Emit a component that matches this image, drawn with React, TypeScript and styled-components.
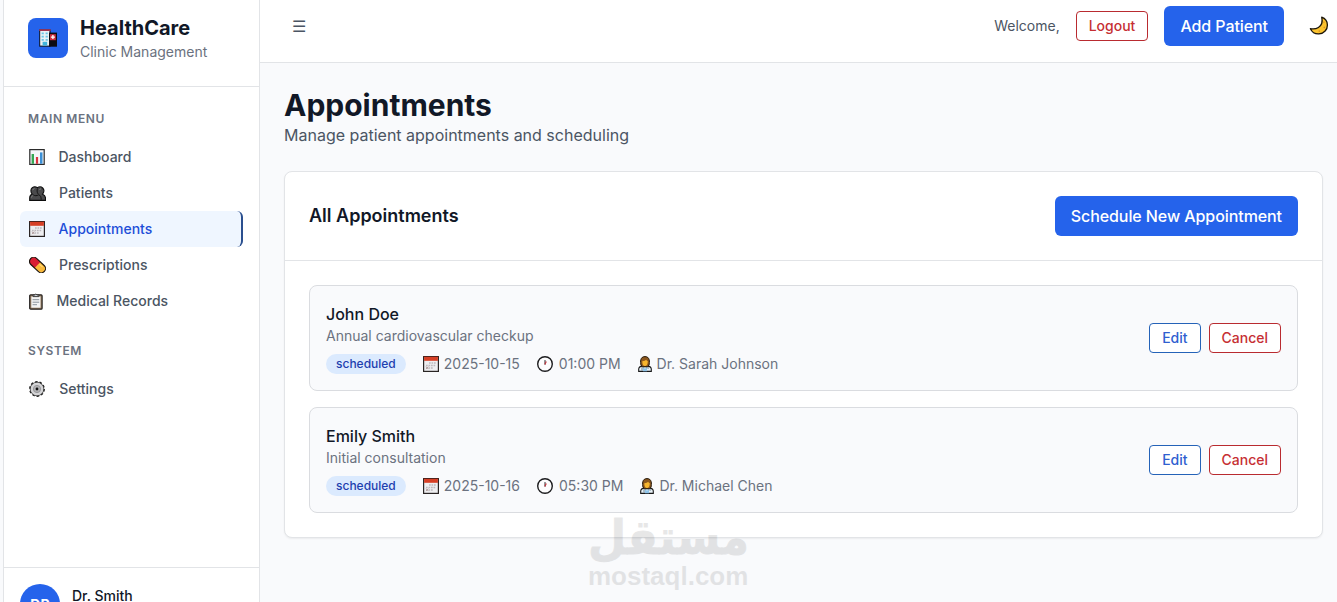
import React from 'react';
import styled, { createGlobalStyle } from 'styled-components';

interface Appointment {
  patient: string;
  reason: string;
  status: string;
  date: string;
  time: string;
  doctor: string;
}

interface MenuEntry {
  label: string;
  icon: React.ReactNode;
  slot: number;
  active?: boolean;
}

const HospitalIcon = () => (
  <svg width="20" height="20" viewBox="0 0 20 20">
    <rect x="1.2" y="1.5" width="11.4" height="17.2" fill="#101828" />
    <rect x="2.2" y="2.6" width="9.2" height="15" fill="#e9f1f6" />
    <rect x="1.2" y="1.2" width="11.4" height="1.8" fill="#a33350" />
    <rect x="11" y="4.6" width="8" height="14.1" fill="#0c0c14" />
    <rect x="12" y="6.2" width="5.8" height="6" fill="#cf2f42" />
    <path d="M14.9 7.1v4M12.9 9.1h4" stroke="#fff" strokeWidth="1.3" />
    <path d="M3.6 5.4h2.2M7.6 5.4h2.2M3.6 8.6h2.2M7.6 8.6h2.2M3.6 11.8h2.2M7.6 11.8h2.2" stroke="#6cc5e6" strokeWidth="1.7" />
    <rect x="4.6" y="13.8" width="4.6" height="3.8" fill="#42b4dc" />
  </svg>
);

const ChartIcon = () => (
  <svg width="16" height="16" viewBox="0 0 16 16">
    <rect x="0.8" y="0.6" width="14.4" height="14.8" fill="#f4f6f8" stroke="#2b2b2b" strokeWidth="1.2" />
    <rect x="2.6" y="5" width="2.4" height="9.8" fill="#35a853" />
    <rect x="6.9" y="8" width="2.2" height="6.8" fill="#d8343f" />
    <rect x="11" y="3.4" width="2.5" height="11.4" fill="#3b8fd6" />
  </svg>
);

const PeopleIcon = () => (
  <svg width="17" height="16" viewBox="0 0 17 16">
    <path
      d="M3.2 9.1C1.5 7 1.4 4.1 3.3 2.6 5 1.4 7 1.7 8.4 2.7c1.6-1.1 3.9-1.1 5.3.3 1.5 1.6 1.3 4.3-.1 6.2 1.8.7 2.8 2 2.9 3.7v2.5H.7V13c0-1.9.9-3.2 2.5-3.9z"
      fill="#4a4a4c"
      stroke="#0c0c0c"
      strokeWidth="1.1"
    />
    <path d="M4.3 9.8c1.4 1.2 3.6 1.2 5.2 0 2 .4 2.7 2 2.7 5" fill="none" stroke="#111" strokeWidth="1" />
    <path d="M8.6 3.5c-.8 1.5-.7 3.7.5 5.4" fill="none" stroke="#111" strokeWidth="1" />
    <path d="M3.7 5.2c.2-1 .9-1.6 1.8-1.7M10.4 5c.3-.8.9-1.2 1.6-1.2M2.2 12.7c.2-1 .8-1.7 1.6-2" fill="none" stroke="#858585" strokeWidth=".9" />
  </svg>
);

const CalendarIcon = () => (
  <svg width="16" height="16" viewBox="0 0 16 16">
    <rect x="0.6" y="0.6" width="14.8" height="14.8" fill="#eeeef0" stroke="#2a2524" strokeWidth="1.2" />
    <rect x="1.1" y="0.8" width="13.8" height="4" fill="#d63f25" />
    <path d="M0 .5h16" stroke="#51231c" />
    <path d="M6 7h7M3 9.5h10M3 12h7" stroke="#bdb9bd" strokeWidth="1.5" strokeDasharray="1.7 .8" />
    <path d="M3 10.5l2.4 2.6M5.4 10.5L3 13.1" stroke="#a58684" strokeWidth=".6" />
  </svg>
);

const PillIcon = () => (
  <svg width="17" height="16" viewBox="0 0 17 16">
    <g transform="rotate(43 8.5 8)">
      <rect x="-.9" y="3.8" width="18.8" height="8.4" rx="4.2" fill="#f8b83a" />
      <path d="M8.5 3.8H3.3a4.2 4.2 0 000 8.4h5.2z" fill="#d81e33" />
      <path d="M9.5 6.1h4.2" stroke="#ffdb7d" strokeWidth="1" />
      <rect x="-.9" y="3.8" width="18.8" height="8.4" rx="4.2" fill="none" stroke="#17110d" strokeWidth="1.1" />
    </g>
  </svg>
);

const ClipboardIcon = () => (
  <svg width="14" height="17" viewBox="0 0 14 17">
    <rect x=".7" y="1.8" width="12.4" height="14.4" rx="1" fill="#9d8265" stroke="#242120" strokeWidth="1.2" />
    <rect x="2.3" y="3.5" width="9.2" height="11.2" fill="#f3f3f3" />
    <path d="M4 3.6V2h1.7Q6.9-.2 8.1 2h1.8v1.6z" fill="#c8ccd0" stroke="#333" strokeWidth=".9" />
    <path d="M3.6 6.7h6.6M3.6 9.2h6.6M3.6 11.7h4.4" stroke="#8a939c" strokeWidth="1" />
  </svg>
);

const GearIcon = () => (
  <svg width="16" height="16" viewBox="0 0 16 16">
    <circle cx="8" cy="8" r="6.8" fill="#d4d4d6" stroke="#3a3a3a" strokeWidth=".8" />
    <circle cx="8" cy="8" r="7.3" fill="none" stroke="#1c1c1c" strokeWidth="1.2" strokeDasharray="2.6 1.99" />
    <circle cx="8" cy="8" r="3.6" fill="#b4b4b6" stroke="#97979a" strokeWidth="1" />
    <circle cx="8" cy="8" r="1.4" fill="#111" />
  </svg>
);

const ClockIcon = () => (
  <svg width="16" height="16" viewBox="0 0 16 16">
    <circle cx="8" cy="8" r="7.3" fill="#fdfdfe" stroke="#1d1d1f" strokeWidth="1.4" />
    <path d="M8 8.6V4.1" stroke="#26262a" strokeWidth="1" />
    <path d="M7.8 8.6l1.5-3.2" stroke="#c5323c" strokeWidth="1.1" />
  </svg>
);

const DoctorIcon = () => (
  <svg width="14" height="16" viewBox="0 0 14 16">
    <path d="M.7 15.4v-2.2c0-2 1.8-3 3.9-3.1h4.8c2.1.1 3.9 1.1 3.9 3.1v2.2z" fill="#e9f2f8" stroke="#181818" strokeWidth="1.1" />
    <path d="M5 10.2l2 2.8 2-2.8v5H5z" fill="#8fc4e9" />
    <path d="M3 9.3C2.2 5.8 2.1.6 7 .6s4.8 5.2 4 8.7L9.4 10.8H4.6z" fill="#8d581e" stroke="#23180c" strokeWidth="1" />
    <path d="M4.3 5.2c1.9-.1 3.1-.6 3.9-1.5.3.8.9 1.3 1.6 1.5-.1 3-.9 4.8-2.8 4.8S4.3 8.2 4.3 5.2z" fill="#f7b62e" />
    <path d="M4 11.2v3.4M10.1 11.2v1.6" stroke="#496577" strokeWidth=".8" />
  </svg>
);

const MoonIcon = () => (
  <svg width="20" height="20" viewBox="0 0 20 20">
    <path
      d="M12.7 1.2c1.1 4.6-.5 8.6-3.3 10.3-2.4 1.5-5.1 1.7-8 1.2 1.6 3.4 4.7 5.4 8.5 5.2 5.2-.3 8.6-4.4 8.5-9-.1-3.5-2.2-6.4-5.7-7.7z"
      fill="#fbc32e"
      stroke="#1b1509"
      strokeWidth="1.3"
      strokeLinejoin="round"
    />
    <path d="M14.9 6.2v.1M15.3 11.3v.1M10.3 15.1v.1" stroke="#dd9420" strokeWidth="1.5" strokeLinecap="round" />
  </svg>
);

const mainMenu: MenuEntry[] = [
  { label: 'Dashboard', icon: <ChartIcon />, slot: 17.4 },
  { label: 'Patients', icon: <PeopleIcon />, slot: 18 },
  { label: 'Appointments', icon: <CalendarIcon />, slot: 17.6, active: true },
  { label: 'Prescriptions', icon: <PillIcon />, slot: 18 },
  { label: 'Medical Records', icon: <ClipboardIcon />, slot: 15.5 },
];

const systemMenu: MenuEntry[] = [{ label: 'Settings', icon: <GearIcon />, slot: 18.2 }];

const appointments: Appointment[] = [
  {
    patient: 'John Doe',
    reason: 'Annual cardiovascular checkup',
    status: 'scheduled',
    date: '2025-10-15',
    time: '01:00 PM',
    doctor: 'Dr. Sarah Johnson',
  },
  {
    patient: 'Emily Smith',
    reason: 'Initial consultation',
    status: 'scheduled',
    date: '2025-10-16',
    time: '05:30 PM',
    doctor: 'Dr. Michael Chen',
  },
];

const Menu = ({ entries }: { entries: MenuEntry[] }) => (
  <MenuList>
    {entries.map((entry) => (
      <MenuItem key={entry.label} $active={entry.active}>
        <MenuIcon $width={entry.slot}>{entry.icon}</MenuIcon>
        <MenuLabel>{entry.label}</MenuLabel>
      </MenuItem>
    ))}
  </MenuList>
);

const AppointmentRow = ({ item }: { item: Appointment }) => (
  <Row>
    <div>
      <PatientName>{item.patient}</PatientName>
      <Reason>{item.reason}</Reason>
      <MetaLine>
        <Badge>{item.status}</Badge>
        <Meta>
          <CalendarIcon />
          {item.date}
        </Meta>
        <Meta $gap={6}>
          <ClockIcon />
          {item.time}
        </Meta>
        <Meta>
          <DoctorIcon />
          {item.doctor}
        </Meta>
      </MetaLine>
    </div>
    <Actions>
      <OutlineButton $color="#2f5fd0" $border="#2563b8">
        Edit
      </OutlineButton>
      <OutlineButton $color="#c62f33" $border="#b92b30">
        Cancel
      </OutlineButton>
    </Actions>
  </Row>
);

const App = () => {
  return (
    <Page>
      <GlobalStyle />
      <Sidebar>
        <Brand>
          <BrandMark>
            <HospitalIcon />
          </BrandMark>
          <div>
            <BrandName>HealthCare</BrandName>
            <BrandSub>Clinic Management</BrandSub>
          </div>
        </Brand>
        <Nav>
          <MenuTitle>MAIN MENU</MenuTitle>
          <Menu entries={mainMenu} />
          <MenuTitle>SYSTEM</MenuTitle>
          <Menu entries={systemMenu} />
        </Nav>
        <UserBar>
          <Avatar>DR</Avatar>
          <UserName>Dr. Smith</UserName>
        </UserBar>
      </Sidebar>
      <Main>
        <TopBar>
          <MenuToggle>☰</MenuToggle>
          <TopActions>
            <Welcome>Welcome,</Welcome>
            <OutlineButton $color="#c62f33" $border="#b92b30">
              Logout
            </OutlineButton>
            <PrimaryButton>Add Patient</PrimaryButton>
            <ThemeToggle>
              <MoonIcon />
            </ThemeToggle>
          </TopActions>
        </TopBar>
        <Content>
          <Title>Appointments</Title>
          <Subtitle>Manage patient appointments and scheduling</Subtitle>
          <Card>
            <CardHeader>
              <CardTitle>All Appointments</CardTitle>
              <PrimaryButton>Schedule New Appointment</PrimaryButton>
            </CardHeader>
            <CardBody>
              {appointments.map((item) => (
                <AppointmentRow key={item.patient} item={item} />
              ))}
            </CardBody>
          </Card>
        </Content>
      </Main>
      <Watermark>
        <WatermarkArabic lang="ar">مستقل</WatermarkArabic>
        <WatermarkLatin>mostaql.com</WatermarkLatin>
      </Watermark>
    </Page>
  );
};

export default App;

const GlobalStyle = createGlobalStyle`
  * {
    box-sizing: border-box;
  }

  body {
    margin: 0;
    overflow: hidden;
    font-family: Inter, "Liberation Sans", sans-serif;
    color: #111827;
  }

  button {
    font-family: inherit;
    cursor: pointer;
  }

  svg {
    display: block;
    flex-shrink: 0;
  }
`;

const Page = styled.div`
  position: relative;
  display: flex;
  height: 602px;
  padding-left: 3px;
  overflow: hidden;
  background: #f9fafc;
`;

const Sidebar = styled.aside`
  display: flex;
  flex-direction: column;
  flex-shrink: 0;
  width: 257px;
  background: #fff;
  border-left: 1px solid #e2e4e7;
  border-right: 1px solid #e2e4e7;
`;

const Brand = styled.div`
  display: flex;
  gap: 12px;
  height: 87px;
  padding: 14px 24px 0;
  border-bottom: 1px solid #e2e4e7;
`;

const BrandMark = styled.div`
  display: flex;
  align-items: center;
  justify-content: center;
  width: 40px;
  height: 40px;
  margin-top: 4px;
  border-radius: 8px;
  background: #2563eb;
`;

const BrandName = styled.div`
  font-size: 20px;
  line-height: 28px;
  font-weight: 700;
`;

const BrandSub = styled.div`
  font-size: 14px;
  line-height: 20px;
  color: #6b7280;
`;

const Nav = styled.nav`
  flex: 1;
  padding: 24px 16px 0;
`;

const MenuTitle = styled.div`
  padding-left: 8px;
  margin-bottom: 12px;
  font-size: 12px;
  line-height: 16px;
  font-weight: 600;
  letter-spacing: 0.6px;
  color: #6b7280;
`;

const MenuList = styled.div`
  margin-bottom: 24px;
`;

const MenuItem = styled.div<{ $active?: boolean }>`
  display: flex;
  align-items: center;
  gap: 12px;
  height: 36px;
  padding-left: 9px;
  border-radius: 6px;
  border-right: 2px solid ${(p) => (p.$active ? '#2a4f8f' : 'transparent')};
  background: ${(p) => (p.$active ? '#eff6ff' : 'transparent')};
  color: ${(p) => (p.$active ? '#1d4ed8' : '#4b5563')};
  font-size: 14px;
  font-weight: 500;
`;

const MenuIcon = styled.span<{ $width: number }>`
  display: flex;
  flex-shrink: 0;
  width: ${(p) => p.$width}px;
`;

const MenuLabel = styled.span`
  line-height: 20px;
  padding-bottom: 1px;
`;

const UserBar = styled.div`
  display: flex;
  gap: 12px;
  height: 35px;
  padding: 16px 16px 0;
  border-top: 1px solid #e2e4e7;
`;

const Avatar = styled.div`
  display: flex;
  align-items: center;
  justify-content: center;
  flex-shrink: 0;
  width: 40px;
  height: 40px;
  border-radius: 50%;
  background: #2563eb;
  color: #fff;
  font-size: 14px;
  font-weight: 700;
`;

const UserName = styled.div`
  padding-top: 2px;
  font-size: 14px;
  line-height: 20px;
  font-weight: 500;
`;

const Main = styled.main`
  flex: 1;
  min-width: 0;
`;

const TopBar = styled.header`
  display: flex;
  justify-content: space-between;
  height: 63px;
  padding: 6px 8px 16px 32px;
  background: #fff;
  border-bottom: 1px solid #e2e4e7;
`;

const MenuToggle = styled.button`
  padding: 0;
  border: 0;
  background: none;
  font-family: Inter, "DejaVu Sans", sans-serif;
  font-size: 16px;
  line-height: 24px;
  color: #4b5563;
`;

const TopActions = styled.div`
  display: flex;
  align-items: center;
  gap: 16px;
`;

const Welcome = styled.span`
  font-size: 14px;
  line-height: 20px;
  color: #4b5563;
`;

const ThemeToggle = styled.div`
  padding-left: 9px;
`;

const OutlineButton = styled.button<{ $color: string; $border: string }>`
  height: 30px;
  padding: 0 12px;
  border: 1px solid ${(p) => p.$border};
  border-radius: 4px;
  background: #fff;
  color: ${(p) => p.$color};
  font-size: 14px;
  line-height: 20px;
  font-weight: 500;
`;

const PrimaryButton = styled.button`
  height: 40px;
  padding: 0 16px;
  border: 0;
  border-radius: 6px;
  background: #2563eb;
  color: #fff;
  font-size: 16px;
  font-weight: 500;
  letter-spacing: -0.08px;
`;

const Content = styled.div`
  padding: 24px 14px 0 24px;
`;

const Title = styled.h1`
  margin: 0;
  font-size: 30px;
  line-height: 36px;
  font-weight: 700;
`;

const Subtitle = styled.p`
  margin: 0 0 24px;
  font-size: 16px;
  line-height: 24px;
  color: #4b5563;
`;

const Card = styled.section`
  border: 1px solid #e2e4e7;
  border-radius: 8px;
  background: #fff;
  box-shadow: 0 1px 2px rgba(0, 0, 0, 0.06);
`;

const CardHeader = styled.div`
  display: flex;
  align-items: center;
  justify-content: space-between;
  padding: 24px;
  border-bottom: 1px solid #e2e4e7;
`;

const CardTitle = styled.h2`
  margin: 0;
  font-size: 18px;
  line-height: 28px;
  font-weight: 600;
`;

const CardBody = styled.div`
  display: flex;
  flex-direction: column;
  gap: 16px;
  padding: 24px;
`;

const Row = styled.div`
  display: flex;
  align-items: center;
  justify-content: space-between;
  padding: 16px;
  border: 1px solid #dadce0;
  border-radius: 8px;
  background: #f9fafc;
`;

const PatientName = styled.div`
  font-size: 16px;
  line-height: 24px;
  font-weight: 500;
`;

const Reason = styled.div`
  font-size: 14px;
  line-height: 20px;
  color: #6b7280;
`;

const MetaLine = styled.div`
  display: flex;
  align-items: center;
  gap: 16px;
  margin-top: 8px;
`;

const Badge = styled.span`
  padding: 2px 10px;
  border-radius: 10px;
  background: #dbeafe;
  color: #1e40af;
  font-size: 12px;
  line-height: 16px;
  font-weight: 500;
`;

const Meta = styled.span<{ $gap?: number }>`
  display: flex;
  align-items: center;
  gap: ${(p) => p.$gap || 5}px;
  padding-left: 1px;
  font-size: 14px;
  line-height: 20px;
  color: #6b7280;
`;

const Actions = styled.div`
  display: flex;
  gap: 8px;
`;

const Watermark = styled.div`
  position: absolute;
  left: 588px;
  top: 516px;
  width: 160px;
  color: #000;
  opacity: 0.09;
  pointer-events: none;
`;

const WatermarkArabic = styled.div`
  width: max-content;
  height: 46px;
  font-family: "DejaVu Sans", sans-serif;
  font-size: 50px;
  line-height: 46px;
  font-weight: 700;
  white-space: nowrap;
  transform: scale(0.88, 0.96);
  transform-origin: 0 0;
  -webkit-text-stroke: 1px #000;
`;

const WatermarkLatin = styled.div`
  font-family: "Liberation Sans", sans-serif;
  font-size: 26px;
  line-height: 28px;
  font-weight: 700;
  text-align: center;
`;
